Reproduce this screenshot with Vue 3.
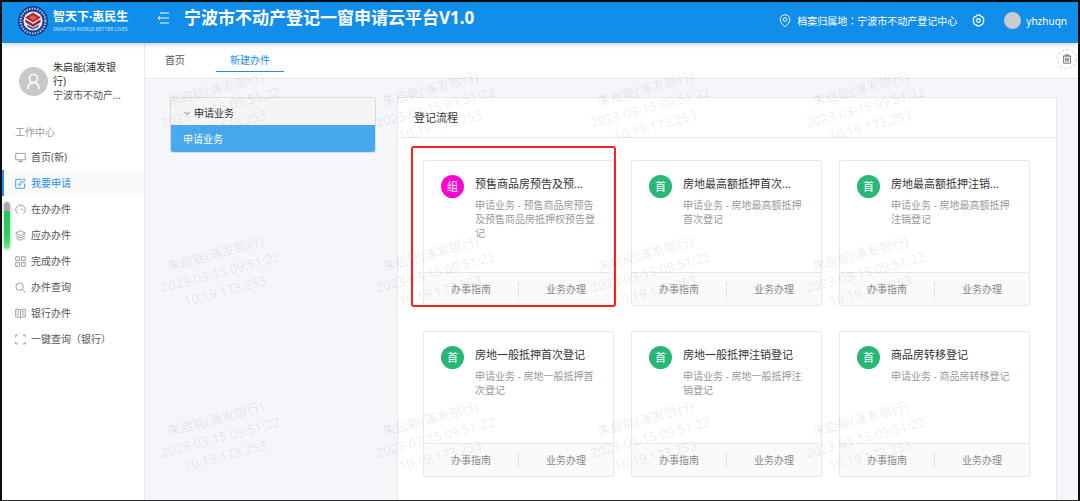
<script setup>
import { ref } from 'vue'

const activeMenu = ref('apply')
const activeTab = ref('create')

const menu = [
  { id: 'home', label: '首页(新)' },
  { id: 'apply', label: '我要申请' },
  { id: 'doing', label: '在办办件' },
  { id: 'todo', label: '应办办件' },
  { id: 'done', label: '完成办件' },
  { id: 'search', label: '办件查询' },
  { id: 'bank', label: '银行办件' },
  { id: 'scan', label: '一键查询（银行）' }
]

const tabs = [
  { id: 'index', label: '首页' },
  { id: 'create', label: '新建办件' }
]

const cards = [
  { mark: '组', title: '预售商品房预告及预售商品房抵押权预告登记', desc: '申请业务 - 预售商品房预告及预售商品房抵押权预告登记', group: true },
  { mark: '首', title: '房地最高额抵押首次登记', desc: '申请业务 - 房地最高额抵押首次登记' },
  { mark: '首', title: '房地最高额抵押注销登记', desc: '申请业务 - 房地最高额抵押注销登记' },
  { mark: '首', title: '房地一般抵押首次登记', desc: '申请业务 - 房地一般抵押首次登记' },
  { mark: '首', title: '房地一般抵押注销登记', desc: '申请业务 - 房地一般抵押注销登记' },
  { mark: '首', title: '商品房转移登记', desc: '申请业务 - 商品房转移登记' }
]
</script>

<template>
  <div class="frame">
    <header class="topbar">
      <div class="brand">
        <svg class="logo" viewBox="0 0 30 30" aria-hidden="true">
          <circle cx="15" cy="15" r="15" fill="#1d3f8f" />
          <circle cx="15" cy="15" r="12.4" fill="none" stroke="#b9cbea" stroke-width="2" stroke-dasharray="1.4 1.3" />
          <circle cx="15" cy="15" r="9.6" fill="#eef2fa" />
          <path d="M15 6.4 23 11.6 15 16.6 7 11.6z" fill="#b5282c" />
          <path d="M15 9.2 19 11.8 15 14.2 11 11.8z" fill="#d9636a" />
          <path d="M7.4 13.2 15 18l7.6-4.8v3L15 21l-7.6-4.8z" fill="#a52630" />
          <path d="M8.6 18.2 15 22l6.4-3.8-1.4 3L15 23.6l-5-2.4z" fill="#34559f" />
        </svg>
        <div class="brand-text">
          <strong>智天下·惠民生</strong>
          <small>SMARTER WORLD BETTER LIVES</small>
        </div>
      </div>
      <button class="fold" aria-label="收起菜单">
        <svg viewBox="0 0 12 12" fill="none" stroke="currentColor">
          <path d="M3 1h9M1 6h11M3 11h9M3.200 3.800 1 6l2.200 2.200" />
        </svg>
      </button>
      <h1>宁波市不动产登记一窗申请云平台V1.0</h1>
      <div class="place">
        <svg viewBox="0 0 12 14" fill="none" stroke="currentColor">
          <path d="M6 13C3.400 10.500 1.200 8 1.200 5.500a4.800 4.800 0 0 1 9.600 0C10.800 8 8.600 10.500 6 13z" />
          <circle cx="6" cy="5.500" r="1.800" />
        </svg>
        <span>档案归属地<span class="colon">：</span>宁波市不动产登记中心</span>
      </div>
      <button class="gear" aria-label="设置">
        <svg viewBox="0 0 14 14" fill="none" stroke="currentColor" stroke-width="1.300">
          <path d="M5.200 1.300h3.600l.8 1.300 1.600.2 1.600 3-.7 1.200.7 1.200-1.600 3-1.600.2-.8 1.300H5.200l-.8-1.300-1.600-.2-1.600-3L1.900 7l-.7-1.200 1.600-3 1.600-.2z" />
          <circle cx="7" cy="7" r="2" />
        </svg>
      </button>
      <div class="account"><span class="face"></span><span>yhzhuqn</span></div>
    </header>

    <div class="body">
      <aside class="side">
        <div class="user">
          <svg class="avatar" viewBox="0 0 29 29" fill="none" stroke="#fff" stroke-width="1.600" aria-hidden="true">
            <circle cx="14.500" cy="14.500" r="14.500" fill="#c8c8c8" stroke="none" />
            <circle cx="14.500" cy="11.500" r="4" />
            <path d="M9 22c0-4 2.200-6.400 5.500-6.400S20 18 20 22" />
          </svg>
          <div class="user-text">
            <div class="name">朱启能(浦发银行)</div>
            <div class="org">宁波市不动产登记中心</div>
          </div>
        </div>
        <div class="section">工作中心</div>
        <nav>
          <a v-for="m in menu" :key="m.id" href="#" :class="{ on: activeMenu === m.id }" @click.prevent="activeMenu = m.id">
            <svg viewBox="0 0 12 12" fill="none" stroke="currentColor" stroke-width=".9" aria-hidden="true">
              <path v-if="m.id === 'home'" d="M.8 1.500h10.400v7H.8zM6 8.500v2M3.500 10.500h5" />
              <path v-else-if="m.id === 'apply'" d="M7 1.500H.8v9.700h9.700V6M4 8l.5-2L9.800.7l1.500 1.500L6 7.500z" />
              <path v-else-if="m.id === 'doing'" d="M3 10.500a5.200 5.200 0 1 1 6 0M6 6.500l2.200-2.200M2.500 6.300h.8M6 2.300v.8M8.700 6.500h.8" />
              <path v-else-if="m.id === 'todo'" d="M6 .8 11.300 3.500 6 6.200.7 3.500zM.7 6 6 8.700 11.300 6M.7 8.500 6 11.200l5.300-2.700" />
              <path v-else-if="m.id === 'done'" d="M.8.8h4v4h-4zM7.200.8h4v4h-4zM.8 7.200h4v4h-4zM7.200 7.200h4v4h-4z" />
              <path v-else-if="m.id === 'search'" d="M9 5A4 4 0 1 1 1 5a4 4 0 0 1 8 0zM8 8l3.500 3.500" />
              <path v-else-if="m.id === 'bank'" d="M.8 1.200c2 0 4 0 5.200.8 1.200-.8 3.200-.8 5.200-.8v8.600c-2 0-4 0-5.200 1-1.200-1-3.200-1-5.200-1zM6 2v8.500M2.300 3.500h2M2.300 5.500h2M2.300 7.500h2M7.700 3.500h2M7.700 5.500h2M7.700 7.500h2" />
              <path v-else d="M.8 3.500V1.200h2.500M8.700 1.200h2.500v2.300M11.200 8.500v2.300H8.700M3.300 10.800H.8V8.500" />
            </svg>
            <span>{{ m.label }}</span>
          </a>
        </nav>
        <div class="gauge"></div>
      </aside>

      <main class="main">
        <div class="tabs">
          <button v-for="t in tabs" :key="t.id" :class="{ on: activeTab === t.id }" @click="activeTab = t.id">{{ t.label }}</button>
          <button class="trash" aria-label="关闭全部">
            <svg viewBox="0 0 12 12" fill="none" stroke="currentColor">
              <path d="M1 2.500h10M4 2.500V1h4v1.500M2 2.500v8.500h8V2.500M4.500 4.500V9M6 4.500V9M7.500 4.500V9" />
            </svg>
          </button>
        </div>

        <div class="content">
          <section class="tree">
            <button class="tree-head">
              <svg viewBox="0 0 8 8" fill="none" stroke="currentColor" aria-hidden="true"><path d="M1.500 3 4 5.500 6.500 3" /></svg>
              <span>申请业务</span>
            </button>
            <button class="tree-item">申请业务</button>
          </section>

          <section class="panel">
            <h2>登记流程</h2>
            <div class="cards">
              <article v-for="(c, i) in cards" :key="c.title" class="card">
                <div class="card-body">
                  <span class="mark" :class="{ group: c.group }">{{ c.mark }}</span>
                  <div class="card-text">
                    <h3>{{ c.title }}</h3>
                    <p>{{ c.desc }}</p>
                  </div>
                </div>
                <div class="card-foot">
                  <button>办事指南</button>
                  <button>业务办理</button>
                </div>
                <div v-if="i === 0" class="highlight"></div>
              </article>
            </div>
          </section>
        </div>
      </main>
    </div>

    <div class="watermarks" aria-hidden="true">
      <div v-for="n in 12" :key="n" class="wm">
        <div>朱启能(浦发银行)<br />2023-03-15 09:51:22<br />10.19.173.253</div>
      </div>
    </div>
  </div>
</template>

<style>
body {
  margin: 0;
}
</style>

<style scoped>
* {
  box-sizing: border-box;
}
.frame {
  position: relative;
  display: flex;
  flex-direction: column;
  min-height: 100vh;
  overflow: hidden;
  border: 2px solid #0b0b0b;
  border-bottom: 1px solid #2a2a2a;
  background: #f4f6fa;
  color: #555;
  font-family: "Noto Sans", "Noto Sans CJK SC", sans-serif;
  font-size: 10px;
  line-height: 14px;
}
button {
  margin: 0;
  padding: 0;
  border: 0;
  background: none;
  color: inherit;
  font: inherit;
  cursor: pointer;
}
svg {
  display: block;
  flex: none;
}
h1,
h2,
h3,
p {
  margin: 0;
}

.topbar {
  position: relative;
  z-index: 2;
  display: flex;
  align-items: center;
  height: 41px;
  padding: 0 11px 4px 16px;
  background: #118eea;
  color: #fff;
  box-shadow: 0 1px 5px rgba(0, 30, 60, 0.25);
}
.brand {
  display: flex;
  align-items: center;
  gap: 5px;
  width: 139px;
}
.logo {
  width: 30px;
  height: 30px;
}
.brand-text strong {
  display: block;
  font-size: 12px;
  line-height: 16px;
  white-space: nowrap;
}
.brand-text small {
  display: block;
  font-size: 5px;
  line-height: 8px;
  white-space: nowrap;
  opacity: 0.75;
}
.fold {
  padding-bottom: 6px;
}
.fold svg {
  width: 12px;
  height: 12px;
}
.topbar h1 {
  flex: 1;
  margin-left: 15px;
  padding-bottom: 6px;
  font-size: 17px;
  line-height: 28px;
  font-weight: 700;
  white-space: nowrap;
}
.place {
  display: flex;
  align-items: center;
  gap: 6px;
  white-space: nowrap;
}
.place svg {
  width: 12px;
  height: 14px;
}
.colon {
  font-family: "Noto Sans CJK TC", sans-serif;
}
.gear {
  margin: 0 19px 0 15px;
}
.gear svg {
  width: 13px;
  height: 13px;
}
.account {
  display: flex;
  align-items: center;
  gap: 5px;
}
.face {
  width: 17px;
  height: 17px;
  border-radius: 50%;
  background: #ccc;
}

.body {
  display: flex;
  flex: 1;
}
.side {
  position: relative;
  flex: none;
  width: 143px;
  border-right: 1px solid #e9e9ec;
  background: #fff;
}
.user {
  display: flex;
  align-items: center;
  gap: 5px;
  padding: 17px 0 0 17px;
}
.avatar {
  width: 29px;
  height: 29px;
}
.user-text {
  width: 70px;
}
.name {
  color: #333;
}
.org {
  overflow: hidden;
  text-overflow: ellipsis;
  white-space: nowrap;
}
.section {
  padding: 23px 0 5px 13px;
  color: #999;
}
nav a {
  display: flex;
  align-items: center;
  gap: 5px;
  height: 26px;
  padding-left: 11px;
  border-left: 2px solid transparent;
  color: #555;
  text-decoration: none;
}
nav svg {
  width: 11px;
  height: 11px;
  color: #888;
}
nav a.on {
  border-left-color: #1890ff;
  background: #fafafa;
  color: #1a8fea;
}
nav a.on svg {
  color: #1a8fea;
}
.gauge {
  position: absolute;
  left: 2px;
  top: 159px;
  width: 6px;
  height: 47px;
  border-radius: 3px;
  background: linear-gradient(#a9a9a9 0 9px, #1fc35a 9px, #33cf68 75%, #7ded82);
  box-shadow: 0 1px 4px rgba(0, 0, 0, 0.25);
}

.main {
  display: flex;
  flex: 1;
  flex-direction: column;
  min-width: 0;
}
.tabs {
  display: flex;
  align-items: center;
  height: 36px;
  padding: 0 1px 0 6px;
  border-bottom: 1px solid #e6e6e6;
  background: #fff;
}
.tabs button {
  height: 22px;
  padding: 0 14px;
  border-bottom: 1px solid transparent;
}
.tabs button.on {
  margin-left: 17px;
  border-bottom-color: #1890ea;
  color: #1890ea;
}
.tabs .trash {
  display: flex;
  align-items: center;
  justify-content: center;
  width: 20px;
  height: 20px;
  margin: 0 0 3px auto;
  padding: 0;
  border: 1px dashed #ccc;
  border-radius: 50%;
}
.trash svg {
  width: 10px;
  height: 10px;
}

.content {
  display: flex;
  flex: 1;
  gap: 21px;
  padding: 18px 21px 0 25px;
}
.tree {
  flex: none;
  align-self: flex-start;
  width: 206px;
  overflow: hidden;
  border: 1px solid #dcdcdc;
  border-radius: 3px;
}
.tree button {
  display: flex;
  align-items: center;
  width: 100%;
}
.tree-head {
  gap: 3px;
  height: 27px;
  padding: 2px 0 0 12px;
  background: #f5f5f5;
  color: #333;
}
.tree-head svg {
  width: 8px;
  height: 8px;
  color: #888;
}
.tree .tree-item {
  height: 27px;
  padding-left: 12px;
  background: #49a9ee;
  color: #fff;
}

.panel {
  flex: 1;
  min-width: 0;
  border: 1px solid #e8e8ea;
  border-bottom: 0;
  background: #fff;
}
.panel h2 {
  height: 40px;
  padding-left: 16px;
  border-bottom: 1px solid #e9e9e9;
  color: #333;
  font-size: 11px;
  font-weight: 400;
  line-height: 40px;
}
.cards {
  display: grid;
  grid-template-columns: repeat(3, 1fr);
  gap: 25px 17px;
  padding: 22px 26px 20px 25px;
}
.card {
  position: relative;
  display: flex;
  flex-direction: column;
  min-width: 0;
  border: 1px solid #e8e8e8;
  border-radius: 2px;
}
.card-body {
  display: flex;
  align-items: flex-start;
  gap: 11px;
  min-height: 111px;
  padding: 14px 16px 8px 17px;
}
.mark {
  flex: none;
  width: 23px;
  height: 23px;
  border-radius: 50%;
  background: #27b877;
  color: #fff;
  font-size: 11px;
  line-height: 23px;
  text-align: center;
}
.mark.group {
  background: #fa05d2;
}
.card-text {
  flex: 1;
  min-width: 0;
}
.card h3 {
  max-width: 114px;
  margin-bottom: 5px;
  overflow: hidden;
  color: #333;
  font-size: 11px;
  font-weight: 400;
  line-height: 18px;
  text-overflow: ellipsis;
  white-space: nowrap;
}
.card p {
  color: #999;
}
.card-foot {
  display: flex;
  align-items: center;
  height: 33px;
  border-top: 1px solid #e8e8e8;
  background: #fafafa;
  color: #888;
}
.card-foot button {
  flex: 1;
  height: 16px;
}
.card-foot button + button {
  border-left: 1px solid #e4e4e4;
}
.highlight {
  position: absolute;
  z-index: 4;
  inset: -15px -3px -2px -13px;
  border: 2px solid #fb2118;
  border-radius: 3px;
  pointer-events: none;
}

.watermarks {
  position: absolute;
  z-index: 1;
  inset: 23px 0 0 111px;
  display: grid;
  grid-template-columns: repeat(4, 215px);
  grid-auto-rows: 165px;
  overflow: hidden;
  color: rgba(0, 0, 0, 0.09);
  font-size: 13px;
  line-height: 19px;
  text-align: center;
  pointer-events: none;
}
.wm {
  display: flex;
  align-items: center;
  justify-content: center;
}
.wm div {
  transform: rotate(-15deg);
  white-space: nowrap;
}
</style>
